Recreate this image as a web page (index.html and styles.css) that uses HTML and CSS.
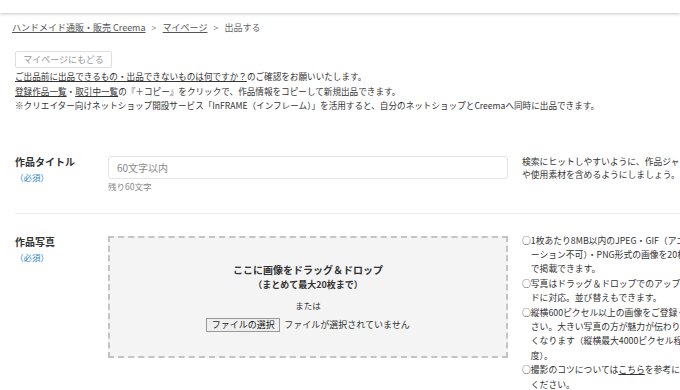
FILE: index.html
```html
<!DOCTYPE html>
<html lang="ja">
<head>
  <meta charset="UTF-8">
  <title>出品する</title>
  <link rel="stylesheet" href="styles.css">
</head>
<body>
  <div class="header"></div>

  <div class="page">
    <div class="breadcrumb">
      <a href="#">ハンドメイド通販・販売 Creema</a>
      <span class="sep">&gt;</span>
      <a href="#">マイページ</a>
      <span class="sep">&gt;</span>
      <span>出品する</span>
    </div>

    <button class="back-btn">マイページにもどる</button>

    <div class="notes">
      <p><a href="#">ご出品前に出品できるもの・出品できないものは何ですか？</a>のご確認をお願いいたします。</p>
      <p><a href="#">登録作品一覧</a>・<a href="#">取引中一覧</a>の『＋コピー』をクリックで、作品情報をコピーして新規出品できます。</p>
      <p>※クリエイター向けネットショップ開設サービス「InFRAME（インフレーム）」を活用すると、自分のネットショップとCreemaへ同時に出品できます。</p>
    </div>

    <div class="form">
      <div class="row row-first">
        <div class="label">
          <div class="label-title">作品タイトル</div>
          <div class="required">（必須）</div>
        </div>
        <div class="field">
          <input class="text-input" type="text" placeholder="60文字以内">
          <div class="counter">残り60文字</div>
        </div>
        <div class="help">
          <p>検索にヒットしやすいように、作品ジャンルや使用素材を含めるようにしましょう。</p>
        </div>
      </div>

      <div class="row">
        <div class="label">
          <div class="label-title">作品写真</div>
          <div class="required">（必須）</div>
        </div>
        <div class="field">
          <div class="dropzone">
            <div class="drop-title">ここに画像をドラッグ＆ドロップ</div>
            <div class="drop-sub">（まとめて最大20枚まで）</div>
            <div class="drop-or">または</div>
            <div class="file-row">
              <span class="file-btn">ファイルの選択</span>
              <span class="file-name">ファイルが選択されていません</span>
            </div>
          </div>
        </div>
        <ul class="help help-list">
          <li>○1枚あたり8MB以内のJPEG・GIF（アニメーション不可）・PNG形式の画像を20枚まで掲載できます。</li>
          <li>○写真はドラッグ＆ドロップでのアップロードに対応。並び替えもできます。</li>
          <li>○縦横600ピクセル以上の画像をご登録ください。大きい写真の方が魅力が伝わりやすくなります（縦横最大4000ピクセル程度）。</li>
          <li>○撮影のコツについては<a href="#">こちら</a>を参考にしてください。</li>
        </ul>
      </div>
    </div>
  </div>
</body>
</html>
```

FILE: styles.css
```css
body {
  margin: 0;
  font-family: "Noto Sans CJK JP", "Noto Sans", sans-serif;
  color: #333;
  background: #fff;
  overflow: hidden;
}
a {
  color: inherit;
}
p {
  margin: 0;
}
.header {
  height: 13px;
  background: #fff;
  box-shadow: 0 1px 3px rgba(0,0,0,0.22);
  position: relative;
}
.page {
  width: 720px;
}
.breadcrumb {
  padding: 8px 12px 0;
  font-size: 9px;
  line-height: 14px;
  color: #666;
}
.breadcrumb a {
  color: #555;
}
.breadcrumb .sep {
  margin: 0 4px;
  color: #888;
}
.back-btn {
  display: block;
  margin: 16px 0 0 15px;
  width: 97px;
  height: 17px;
  padding: 0;
  font-family: inherit;
  font-size: 9px;
  color: #999;
  background: #fff;
  border: 1px solid #ddd;
  border-radius: 2px;
}
.notes {
  margin-top: 1px;
  padding-left: 15px;
  font-size: 8.6px;
  line-height: 14.5px;
  white-space: nowrap;
}
.form {
  margin-top: 43px;
  margin-left: 15px;
}
.row {
  display: flex;
  align-items: flex-start;
  padding: 22px 0 20px;
}
.row-first {
  padding-top: 0;
  border-bottom: 1px solid #eee;
}
.label {
  width: 93px;
  flex: none;
  margin-top: -1px;
}
.label-title {
  font-size: 10px;
  line-height: 14px;
  font-weight: bold;
}
.required {
  margin-top: 1px;
  font-size: 8.5px;
  line-height: 14px;
  color: #2a8ccf;
}
.field {
  width: 400px;
  flex: none;
}
.text-input {
  display: block;
  box-sizing: border-box;
  width: 400px;
  height: 23px;
  padding: 0 8px;
  border: 1px solid #e4e4e4;
  border-radius: 3px;
  font-family: inherit;
  font-size: 10px;
  outline: none;
}
.text-input::placeholder {
  color: #888;
}
.counter {
  font-size: 8.5px;
  line-height: 14px;
  color: #888;
}
.help {
  margin: -1px 0 0 14px;
  width: 178px;
  flex: none;
  font-size: 8.8px;
  line-height: 13px;
}
.dropzone {
  box-sizing: border-box;
  height: 122px;
  padding-top: 24px;
  border: 2px dashed #c4c4c4;
  background: #f4f4f4;
  text-align: center;
}
.drop-title {
  font-size: 10px;
  line-height: 15px;
  font-weight: bold;
}
.drop-sub {
  font-size: 9px;
  line-height: 15px;
  font-weight: bold;
}
.drop-or {
  margin-top: 6px;
  font-size: 8.5px;
  line-height: 14px;
}
.file-row {
  margin-top: 6px;
  font-size: 9px;
  line-height: 14px;
}
.file-btn {
  display: inline-block;
  width: 72px;
  border: 1px solid #999;
  background: #efefef;
  line-height: 12px;
  color: #222;
}
.file-name {
  margin-left: 2px;
}
.help-list {
  margin-top: -2px;
  padding: 0;
  list-style: none;
  line-height: 14.4px;
}
.help-list li {
  padding-left: 1em;
  text-indent: -1em;
}
```
